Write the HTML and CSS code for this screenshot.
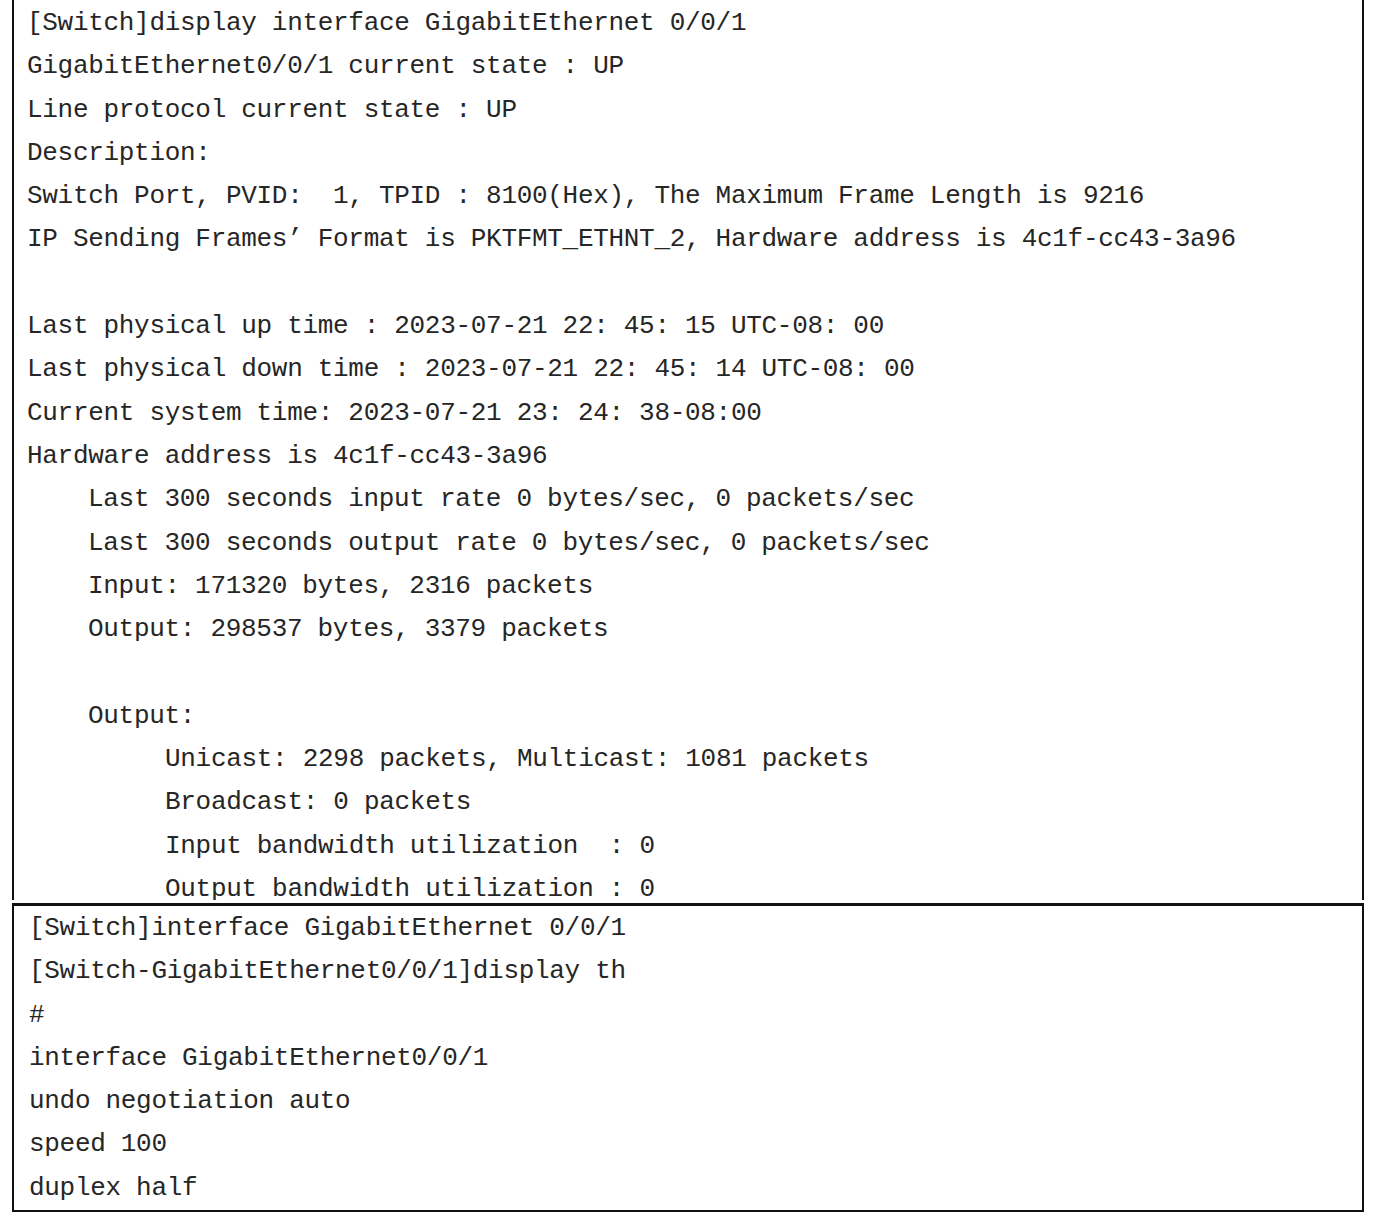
FILE: index.html
```html
<!DOCTYPE html>
<html>
<head>
<meta charset="utf-8">
<title>display interface</title>
<link rel="stylesheet" href="styles.css">
</head>
<body>
<div class="page">
  <div class="screen screen-top">
    <div class="line">[Switch]display interface GigabitEthernet 0/0/1</div>
    <div class="line">GigabitEthernet0/0/1 current state : UP</div>
    <div class="line">Line protocol current state : UP</div>
    <div class="line">Description:</div>
    <div class="line">Switch Port, PVID:  1, TPID : 8100(Hex), The Maximum Frame Length is 9216</div>
    <div class="line">IP Sending Frames’ Format is PKTFMT_ETHNT_2, Hardware address is 4c1f-cc43-3a96</div>
    <div class="line blank"></div>
    <div class="line">Last physical up time : 2023-07-21 22: 45: 15 UTC-08: 00</div>
    <div class="line">Last physical down time : 2023-07-21 22: 45: 14 UTC-08: 00</div>
    <div class="line">Current system time: 2023-07-21 23: 24: 38-08:00</div>
    <div class="line">Hardware address is 4c1f-cc43-3a96</div>
    <div class="line indent1">Last 300 seconds input rate 0 bytes/sec, 0 packets/sec</div>
    <div class="line indent1">Last 300 seconds output rate 0 bytes/sec, 0 packets/sec</div>
    <div class="line indent1">Input: 171320 bytes, 2316 packets</div>
    <div class="line indent1">Output: 298537 bytes, 3379 packets</div>
    <div class="line blank"></div>
    <div class="line indent1">Output:</div>
    <div class="line indent2">Unicast: 2298 packets, Multicast: 1081 packets</div>
    <div class="line indent2">Broadcast: 0 packets</div>
    <div class="line indent2">Input bandwidth utilization  : 0</div>
    <div class="line indent2">Output bandwidth utilization : 0</div>
  </div>
  <div class="screen screen-bottom">
    <div class="line">[Switch]interface GigabitEthernet 0/0/1</div>
    <div class="line">[Switch-GigabitEthernet0/0/1]display th</div>
    <div class="line">#</div>
    <div class="line">interface GigabitEthernet0/0/1</div>
    <div class="line">undo negotiation auto</div>
    <div class="line">speed 100</div>
    <div class="line">duplex half</div>
  </div>
</div>
</body>
</html>
```

FILE: styles.css
```css
html, body {
  margin: 0;
  padding: 0;
  background: #ffffff;
}

.page {
  width: 1376px;
  padding-left: 12px;
  box-sizing: border-box;
  display: flex;
  flex-direction: column;
}

.screen {
  width: 1352px;
  box-sizing: border-box;
  border-left: 2px solid #111111;
  border-right: 2px solid #111111;
  font-family: "Liberation Mono", "Courier New", monospace;
  font-size: 26px;
  letter-spacing: -0.3px;
  color: #262626;
  overflow: hidden;
}

.screen-top {
  height: 900px;
  padding-top: 2px;
  padding-left: 13px;
}

.screen-bottom {
  margin-top: 3px;
  border-top: 3px solid #111111;
  border-bottom: 2px solid #111111;
  padding-top: 1px;
  padding-left: 15px;
}

.line {
  height: 43.3px;
  line-height: 43.3px;
  white-space: pre;
}

.indent1 {
  padding-left: 61px;
}

.indent2 {
  padding-left: 138px;
}
```
